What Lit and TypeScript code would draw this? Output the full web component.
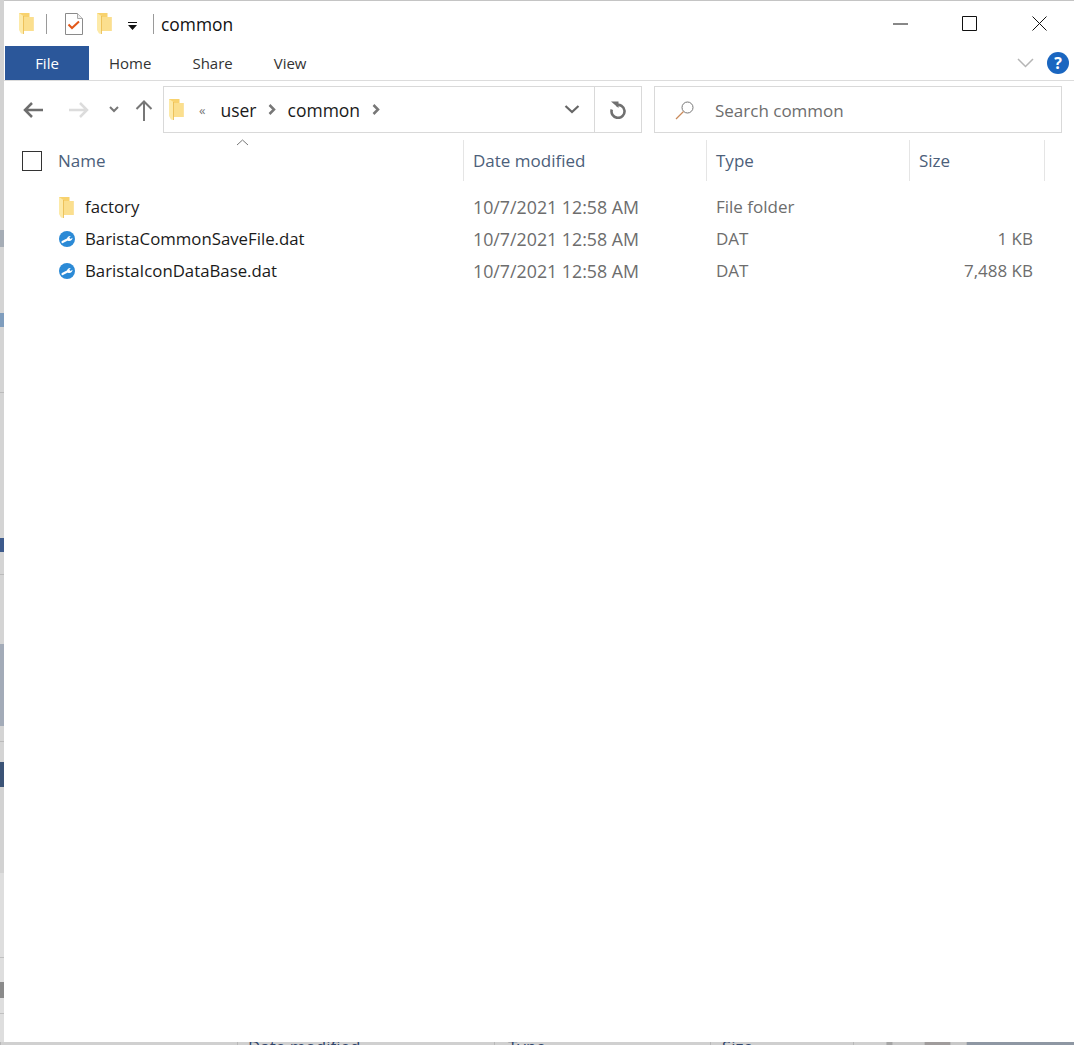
import { LitElement, html, css } from 'lit';
import { customElement } from 'lit/decorators.js';

const folder = () => html`<svg class="ico" width="15" height="21" viewBox="0 0 15 21">
  <path d="M0 0h10.500v4H14.500v14H4V4H0z" fill="#f8d26e"/>
  <path d="M4 4h10.500v14H4z" fill="#fbdf8e"/>
  <path d="M0 0l4.500 3v18L2 20.500 0 17z" fill="#fdeaa8"/>
  <path d="M4.500 3v18" stroke="#e8b94a" stroke-width=".8"/>
</svg>`;

const wrench = html`<svg class="ico" width="16" height="16" viewBox="0 0 16 16">
  <circle cx="8" cy="8" r="8" fill="#2b8ad6"/>
  <path d="M3.500 11 8.800 8.200" stroke="#fff" stroke-width="2.200" stroke-linecap="round"/>
  <path d="M8 8.500c-.2-2 1.300-3.700 3.800-3.500l-1.500 1.700 1.300 1.300 1.900-1.200c.2 2.300-2.200 3.700-4.500 3z" fill="#fff"/>
</svg>`;

const chevron = html`<svg class="ico" width="8" height="11" viewBox="0 0 8 11"><path d="M1.500 1l4.500 4.500L1.500 10" fill="none" stroke="#777" stroke-width="2.500"/></svg>`;

const rows = [
  { name: 'factory', type: 'File folder', size: '', dir: true },
  { name: 'BaristaCommonSaveFile.dat', type: 'DAT', size: '1 KB', dir: false },
  { name: 'BaristaIconDataBase.dat', type: 'DAT', size: '7,488 KB', dir: false },
];

// slivers of the window behind, running down the left edge: [height, colour]
const leftBands = [
  [230, '#d2d2d2'], [17, '#a6adb6'], [66, '#d4d4d4'], [14, '#7f9dbd'], [65, '#d4d4d4'], [1, '#bbbbbb'],
  [145, '#d4d4d4'], [14, '#3d5a8c'], [22, '#d4d4d4'], [1, '#bbbbbb'], [69, '#d4d4d4'], [82, '#a3abb8'],
  [15, '#d4d4d4'], [1, '#bbbbbb'], [20, '#d4d4d4'], [25, '#3b5376'], [86, '#d2d2d2'], [84, '#dedede'],
  [1, '#c0c0c0'], [24, '#dedede'], [16, '#8a8a8a'], [15, '#dedede'], [1, '#c0c0c0'], [28, '#dedede'],
] as const;

// the same along the bottom: [width, colour, label of the column header behind, text inset]
const bottomBands = [
  [237, '#d0d0d0', '', 0], [257, '#d0d0d0', 'Date modified', 10], [216, '#d0d0d0', 'Type', 13], [143, '#cfcfcf', 'Size', 11],
  [33, '#d0d0d0', '', 0], [6, '#a5a5a5', '', 0], [32, '#c8c8c8', '', 0], [26, '#a09c9c', '', 0], [16, '#c8c8c8', '', 0], [108, '#8e97a3', '', 0],
] as const;

@customElement('app-root')
export class AppRoot extends LitElement {
  static styles = css`
    :host {
      display: block;
      height: 1045px;
      overflow: hidden;
      font-family: 'Open Sans', 'Noto Sans', sans-serif;
      font-size: 17px;
      color: #1a1a1a;
      background: #d4d4d4;
    }
    .screen { display: flex; height: 1042px; }
    .left-edge { width: 4px; flex: none; display: flex; flex-direction: column; }
    .bottom-edge { height: 3px; display: flex; overflow: hidden; }
    .bottom-band {
      flex: none;
      box-sizing: border-box;
      border-left: 1px solid #b8b8b8;
      line-height: 10px;
      color: #31456b;
      white-space: nowrap;
    }
    .window {
      flex: 1;
      min-width: 0;
      background: #fff;
      border-top: 1px solid #c4c4c4;
      display: flex;
      flex-direction: column;
    }
    .ico { display: block; flex: none; }

    .titlebar { height: 45px; display: flex; align-items: center; flex: none; }
    .quick { display: flex; align-items: center; padding-left: 15px; }
    .sep { width: 1px; height: 20px; background: #9a9a9a; }
    .sep.first { margin: 0 18px 0 12px; }
    .doc { margin-right: 14px; }
    .qat-menu { margin: 4px 15px 0 16px; }
    .title { margin-left: 7px; font-size: 17.400px; color: #111; }
    .winbtns { margin-left: auto; display: flex; align-items: center; gap: 54px; padding-right: 27px; }
    .winbtns .close { margin-left: 1px; }

    .tabs { height: 34px; flex: none; display: flex; align-items: stretch; border-bottom: 1px solid #dcdcdc; }
    .tab { display: flex; align-items: center; font-size: 15px; color: #333; }
    .tab.file {
      width: 84px;
      margin-left: 1px;
      justify-content: center;
      background: #2b579a;
      color: #fff;
    }
    .tab.home { margin-left: 20px; }
    .tab.share { margin-left: 41px; }
    .tab.view { margin-left: 41px; }
    .ribbon-end { margin-left: auto; display: flex; align-items: center; gap: 13px; padding-right: 5px; }
    .help {
      width: 22px;
      height: 22px;
      border-radius: 50%;
      background: #1a66c0;
      color: #fff;
      font-weight: 700;
      font-size: 16px;
      display: flex;
      align-items: center;
      justify-content: center;
    }

    .navrow { height: 47px; margin-top: 5px; flex: none; display: flex; align-items: center; }
    .navbtns { width: 159px; flex: none; display: flex; align-items: center; padding-left: 18px; box-sizing: border-box; }
    .fwd { margin-left: 24px; }
    .recent { margin-left: 19px; }
    .up { margin-left: 16px; }
    .address {
      width: 479px;
      height: 47px;
      flex: none;
      box-sizing: border-box;
      border: 1px solid #d9d9d9;
      display: flex;
      align-items: center;
      padding-left: 5px;
      font-size: 17.500px;
    }
    .crumb-back { margin: 0 15px 0 15px; color: #777; font-size: 13px; }
    .crumb-user { margin-right: 11px; }
    .crumb-common { margin: 0 12px; }
    .addr-end { margin-left: auto; display: flex; align-items: center; height: 100%; }
    .addr-chev { margin-right: 14px; }
    .refresh {
      height: 100%;
      width: 46px;
      border-left: 1px solid #d9d9d9;
      display: flex;
      align-items: center;
      justify-content: center;
    }
    .search {
      width: 408px;
      height: 47px;
      margin-left: 12px;
      flex: none;
      box-sizing: border-box;
      border: 1px solid #d9d9d9;
      display: flex;
      align-items: center;
      padding-left: 20px;
      gap: 20px;
      color: #6d6d6d;
    }
    .search span { padding-top: 2px; }

    .columns {
      position: relative;
      display: grid;
      grid-template-columns: 460px 243px 203px 135px;
      height: 41px;
      margin-top: 7px;
      flex: none;
      color: #4c607a;
    }
    .column { display: flex; align-items: center; padding-left: 9px; border-right: 1px solid #e5e5e5; }
    .column.name-col { padding-left: 18px; gap: 16px; }
    .check { width: 20px; height: 20px; box-sizing: border-box; border: 1px solid #333; }
    .sort { position: absolute; left: 232px; top: -1px; }

    .list { padding-top: 10px; }
    .row {
      display: grid;
      grid-template-columns: 460px 243px 203px 123px;
      height: 32px;
      align-items: center;
    }
    .name { display: flex; align-items: center; padding-left: 55px; font-size: 16.800px; }
    .name span { margin-bottom: 2px; }
    .file-ico { width: 26px; flex: none; }
    .cell { padding-left: 9px; color: #6d6d6d; margin-bottom: 2px; }
    .date { font-size: 17.800px; margin-bottom: 0; }
    .size { text-align: right; }
  `;

  private renderFile(r: (typeof rows)[number]) {
    return html`<div class="row">
      <div class="name"><div class="file-ico">${r.dir ? folder() : wrench}</div><span>${r.name}</span></div>
      <div class="cell date">10/7/2021 12:58 AM</div>
      <div class="cell">${r.type}</div>
      <div class="cell size">${r.size}</div>
    </div>`;
  }

  render() {
    return html`
      <div class="screen">
        <div class="left-edge">
          ${leftBands.map(([h, c]) => html`<div style="flex:none;height:${h}px;background:${c}"></div>`)}
        </div>
        <div class="window">
          <div class="titlebar">
            <div class="quick">
              ${folder()}
              <div class="sep first"></div>
              <svg class="ico doc" width="18" height="22" viewBox="0 0 18 22">
                <path d="M.5.500h12l5 5v16H.5z" fill="#fff" stroke="#8a8a8a"/>
                <path d="M12.500.500v5h5" fill="#eee" stroke="#aaa"/>
                <path d="M3.500 11.500l3.500 3.500 7-6.500" fill="none" stroke="#e2581a" stroke-width="2"/>
              </svg>
              ${folder()}
              <svg class="ico qat-menu" width="10" height="8" viewBox="0 0 10 8">
                <path d="M0 0h9v1H0zM0 3h9L4.500 8z" fill="#111"/>
              </svg>
              <div class="sep"></div>
            </div>
            <div class="title">common</div>
            <div class="winbtns">
              <svg class="ico" width="15" height="2" viewBox="0 0 15 2"><path d="M0 1h15" stroke="#111"/></svg>
              <svg class="ico" width="15" height="15" viewBox="0 0 15 15"><path d="M.5.500h14v14H.5z" fill="none" stroke="#111"/></svg>
              <svg class="ico close" width="15" height="15" viewBox="0 0 15 15"><path d="M.5.500l14 14M14.500.500l-14 14" stroke="#111"/></svg>
            </div>
          </div>

          <div class="tabs">
            <div class="tab file">File</div>
            <div class="tab home">Home</div>
            <div class="tab share">Share</div>
            <div class="tab view">View</div>
            <div class="ribbon-end">
              <svg class="ico" width="17" height="10" viewBox="0 0 17 10"><path d="M1 1l7.500 7.500L16 1" fill="none" stroke="#b5b5b5" stroke-width="1.500"/></svg>
              <div class="help">?</div>
            </div>
          </div>

          <div class="navrow">
            <div class="navbtns">
              <svg class="ico" width="22" height="18" viewBox="0 0 22 18"><path d="M21 9H3M10 2L3 9l7 7" fill="none" stroke="#6e6e6e" stroke-width="2.500"/></svg>
              <svg class="ico fwd" width="22" height="18" viewBox="0 0 22 18"><path d="M1 9h18M12 2l7 7-7 7" fill="none" stroke="#dcdcdc" stroke-width="2.500"/></svg>
              <svg class="ico recent" width="10" height="7" viewBox="0 0 10 7"><path d="M1 1l4 4 4-4" fill="none" stroke="#777" stroke-width="2"/></svg>
              <svg class="ico up" width="18" height="22" viewBox="0 0 18 22"><path d="M9 22V3M1.500 10L9 2.500l7.500 7.500" fill="none" stroke="#777" stroke-width="2"/></svg>
            </div>
            <div class="address">
              ${folder()}
              <span class="crumb-back">«</span>
              <span class="crumb-user">user</span>
              ${chevron}
              <span class="crumb-common">common</span>
              ${chevron}
              <div class="addr-end">
                <svg class="ico addr-chev" width="16" height="9" viewBox="0 0 16 9"><path d="M1.500 1l6.500 6 6.500-6" fill="none" stroke="#666" stroke-width="2.200"/></svg>
                <div class="refresh">
                  <svg class="ico" width="18" height="19" viewBox="0 0 18 19">
                    <path d="M7 5.200A6.500 6.500 0 1 1 2.800 9.500" fill="none" stroke="#707070" stroke-width="2.600"/>
                    <path d="M2 1.500h7.500V8z" fill="#707070"/>
                  </svg>
                </div>
              </div>
            </div>
            <div class="search">
              <svg class="ico" width="20" height="20" viewBox="0 0 20 20">
                <circle cx="12.500" cy="7.500" r="5.500" fill="none" stroke="#777"/>
                <path d="M8.500 11.500L1 19" stroke="#c98a5a" stroke-width="1.200"/>
              </svg>
              <span>Search common</span>
            </div>
          </div>

          <div class="columns">
            <div class="column name-col"><div class="check"></div>Name</div>
            <div class="column">Date modified</div>
            <div class="column">Type</div>
            <div class="column">Size</div>
            <svg class="sort" width="13" height="7" viewBox="0 0 13 7"><path d="M1 6l5.500-5L12 6" fill="none" stroke="#777"/></svg>
          </div>

          <div class="list">${rows.map((r) => this.renderFile(r))}</div>
        </div>
      </div>
      <div class="bottom-edge">
        ${bottomBands.map(([w, c, label, inset]) => html`<div class="bottom-band" style="width:${w}px;background:${c};padding-left:${inset}px">${label}</div>`)}
      </div>
    `;
  }
}

declare global {
  interface HTMLElementTagNameMap {
    'app-root': AppRoot;
  }
}
